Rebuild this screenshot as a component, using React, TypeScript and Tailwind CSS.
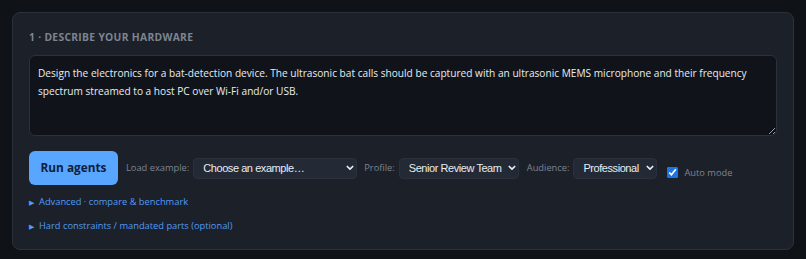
import { useState } from "react";

const sans = "font-['Open_Sans','Noto_Sans',sans-serif]";

function Select({ value, options, width }: { value: string; options: string[]; width: string }) {
  return (
    <div className={`relative shrink-0 ${width}`}>
      <select
        defaultValue={value}
        className="block h-[21px] w-full appearance-none rounded-[4px] border border-[#2a313c] bg-[#232a35] pl-[9px] pr-4 font-['Liberation_Sans',Arial,sans-serif] text-[11px] leading-none tracking-[-0.04em] text-[#e6edf3] outline-none"
      >
        {options.map((o) => (
          <option key={o}>{o}</option>
        ))}
      </select>
      <svg
        className="pointer-events-none absolute right-[3px] top-[7px] h-[6px] w-[8px]"
        viewBox="0 0 8 6"
        fill="none"
      >
        <path d="M1.3 1.5 4 4.2 6.7 1.5" stroke="#e6edf3" strokeWidth="1.7" strokeLinecap="round" strokeLinejoin="round" />
      </svg>
    </div>
  );
}

export default function App() {
  const [auto, setAuto] = useState(true);
  const label = "shrink-0 whitespace-nowrap text-[9.3px] text-[#7d8590]";

  return (
    <div className={`h-[259px] overflow-hidden bg-[#0f1217] p-3 ${sans}`}>
      <section className="rounded-lg border border-[#2b313b] bg-[#1c2029] px-4 pt-4 pb-[14px]">
        <h2 className="mb-[10px] text-[10.3px] leading-4 font-bold uppercase tracking-[0.03em] text-[#7d8590]">
          1 · Describe your hardware
        </h2>
        <textarea
          className="block h-[81px] w-full resize-y rounded-md border border-[#2b313b] bg-[#10141a] px-2 py-[8px] text-[10.15px] leading-[18px] text-[#e6edf3] outline-none"
          defaultValue="Design the electronics for a bat-detection device. The ultrasonic bat calls should be captured with an ultrasonic MEMS microphone and their frequency spectrum streamed to a host PC over Wi-Fi and/or USB."
        />

        <div className="mt-[15px] flex items-center">
          <button className="h-[34px] w-[89px] shrink-0 whitespace-nowrap rounded-md bg-[#58a6ff] text-[11.8px] font-bold text-[#0d2040]">
            Run agents
          </button>
          <span className={`ml-2 ${label}`}>Load example:</span>
          <div className="ml-1">
            <Select value="Choose an example…" options={["Choose an example…"]} width="w-[164px]" />
          </div>
          <span className={`ml-[7px] ${label}`}>Profile:</span>
          <div className="ml-1">
            <Select value="Senior Review Team" options={["Senior Review Team"]} width="w-[120px]" />
          </div>
          <span className={`ml-2 ${label}`}>Audience:</span>
          <div className="ml-1">
            <Select value="Professional" options={["Professional"]} width="w-[84px]" />
          </div>
          <label className={`ml-[10px] mt-[9px] flex items-center gap-[6px] ${label}`}>
            <input
              type="checkbox"
              checked={auto}
              onChange={(e) => setAuto(e.target.checked)}
              className="m-0 h-[11px] w-[11px] accent-[#1a73e8]"
            />
            Auto mode
          </label>
        </div>

        <div className="mt-[9px] flex flex-col gap-[7px] text-[9.3px] leading-4 text-[#539bf5]">
          <details>
            <summary className="cursor-pointer list-none">
              <span className="mr-[5px] text-[7px]">▶</span>Advanced · compare &amp; benchmark
            </summary>
          </details>
          <details>
            <summary className="cursor-pointer list-none">
              <span className="mr-[5px] text-[7px]">▶</span>Hard constraints / mandated parts (optional)
            </summary>
          </details>
        </div>
      </section>
    </div>
  );
}
